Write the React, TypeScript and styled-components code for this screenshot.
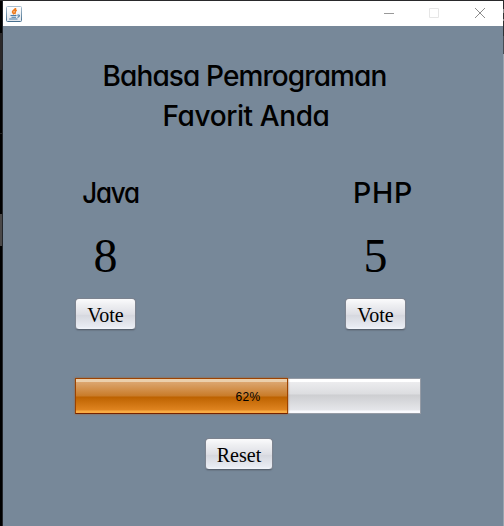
import React, { useState } from 'react';
import styled, { createGlobalStyle } from 'styled-components';

const GlobalStyle = createGlobalStyle`
  * { box-sizing: border-box; }
  html, body { margin: 0; padding: 0; overflow: hidden; background: #000; }
`;

const Desktop = styled.div`
  width: 504px;
  height: 526px;
  display: grid;
  grid-template-columns: 3px 500px 1px;
  padding-top: 1px;
  background: #29292b;
  overflow: hidden;
`;

const LeftEdge = styled.div`
  background: linear-gradient(#000 0 32px, #2b292a 32px 69px, #000 69px 132px, #222 132px 133px, #000 133px 213px, #4a4848 213px 245px, #000 245px);
  border-right: 1px solid #22252a;
`;

const RightEdge = styled.div`
  background: linear-gradient(#29292b 0 8px, #8b8b8c 8px 12px, #333 12px 18px, #8b8b8c 18px 20px, #333 20px 24px, #2c3035 24px 35px, #464c54 35px 53px, #98a4af 53px);
`;

const Window = styled.main`
  display: flex;
  flex-direction: column;
  background: #778899;
`;

const TitleBar = styled.header`
  height: 25px;
  flex: none;
  display: flex;
  align-items: center;
  justify-content: space-between;
  padding-left: 3px;
  background: #fff;
`;

const WindowControls = styled.div`
  display: flex;
`;

const ControlButton = styled.button<{ $width: number }>`
  width: ${({ $width }) => $width}px;
  height: 25px;
  display: flex;
  align-items: flex-start;
  justify-content: center;
  padding: 7px 0 0;
  border: 0;
  background: none;
`;

const Content = styled.section`
  flex: 1;
  display: flex;
  flex-direction: column;
  align-items: center;
  padding: 30px 10px 0 0;
  color: #000;
`;

const Title = styled.h1`
  width: 330px;
  margin: 0;
  text-align: center;
  font: 500 28px/40px Inter, "Liberation Sans", sans-serif;
  font-feature-settings: "cv11";
  white-space: nowrap;
`;

const TitleLine = styled.span<{ $tracking: number; $inset: number }>`
  display: block;
  padding-right: ${({ $inset }) => $inset}px;
  letter-spacing: ${({ $tracking }) => $tracking}px;
`;

const Candidates = styled.div`
  display: flex;
  align-self: flex-start;
  width: 351px;
  justify-content: space-between;
  margin: 37px 0 0 62px;
`;

const Candidate = styled.article`
  width: 81px;
  display: flex;
  flex-direction: column;
  align-items: center;
`;

const CandidateName = styled.h2<{ $shift: number; $tracking: number; $scale: number }>`
  margin: 0;
  padding-left: ${({ $shift }) => $shift}px;
  font: 500 28.5px/40px Inter, "Liberation Sans", sans-serif;
  font-feature-settings: "cv11";
  letter-spacing: ${({ $tracking }) => $tracking}px;
  transform: scaleX(${({ $scale }) => $scale});
`;

const Count = styled.output`
  height: 69px;
  margin-top: 16px;
  font: 48px/54px "Liberation Serif", serif;
`;

const MetalButton = styled.button<{ $width: number }>`
  width: ${({ $width }) => $width}px;
  height: 32px;
  flex: none;
  padding: 1px 0 0;
  border: 1px solid #7c838f;
  border-bottom-color: #596370;
  border-radius: 4px;
  background: linear-gradient(#fbfbfc 0, #eeeff2 20%, #dedfe5 51%, #d6d8df 55%, #e8ebf2 92%, #f2f5fb);
  box-shadow: 0 1px 1px #6b7988;
  color: #000;
  font: 20px/28px "Liberation Serif", serif;
`;

const ResetRow = styled.div`
  padding-right: 18px;
`;

const ProgressTrack = styled.div`
  position: relative;
  width: 346px;
  height: 36px;
  flex: none;
  margin: 48px 0 24px;
  border: 1px solid #959ba5;
  background: linear-gradient(#fff 0 3px, #ececee 3px, #dcdde0 15px, #cdced1 16px, #e5e6ea 31px, #fafbff 32px);
`;

const ProgressFill = styled.div<{ $width: number }>`
  width: ${({ $width }) => $width}px;
  height: 36px;
  margin: -1px 0 0 -1px;
  border: 1px solid #9c4200;
  border-bottom-color: #742200;
  background: linear-gradient(#ebcfac 0 3px, #dca670 3px, #c97b28 17px, #bd6200 18px, #df8420 31px, #f9ab43 32px);
  box-shadow: 0 0 2px #9b6437;
`;

const ProgressLabel = styled.span`
  position: absolute;
  inset: 1px 0 0;
  text-align: center;
  font: 12px/35px "Liberation Sans", sans-serif;
  letter-spacing: 0.3px;
`;

function JavaIcon() {
  return (
    <svg width="16" height="16" viewBox="0 0 16 16" aria-label="Java">
      <defs>
        <linearGradient id="frame" x2="0" y2="1">
          <stop stopColor="#a9bfd0" />
          <stop offset="1" stopColor="#476f8e" />
        </linearGradient>
        <linearGradient id="paper" x2="0" y2="1">
          <stop stopColor="#fff" />
          <stop offset="1" stopColor="#dfe4ea" />
        </linearGradient>
      </defs>
      <rect x=".5" y=".5" width="15" height="15" rx="1" fill="url(#paper)" stroke="url(#frame)" />
      <path d="M9.5 2C9.8 4.2 6 4.4 6.6 6.2L8 8.3M10.7 4C8.3 5 9.8 6.2 8.6 8" fill="none" stroke="#ef7b1b" strokeWidth="1.7" />
      <path d="M4.5 9.5H10.5M5.5 11.3H10M11.3 9.2C14.3 8.2 13.9 10.6 11.5 11.4M3.2 13H11.5" fill="none" stroke="#4a7ca6" strokeWidth="1.1" />
    </svg>
  );
}

interface CandidatePanelProps {
  name: string;
  votes: number;
  shift: number;
  tracking: number;
  scale: number;
  onVote: () => void;
}

function CandidatePanel({ name, votes, shift, tracking, scale, onVote }: CandidatePanelProps) {
  return (
    <Candidate>
      <CandidateName $shift={shift} $tracking={tracking} $scale={scale}>{name}</CandidateName>
      <Count>{votes}</Count>
      <MetalButton $width={61} onClick={onVote}>Vote</MetalButton>
    </Candidate>
  );
}

export default function App() {
  const [java, setJava] = useState(8);
  const [php, setPhp] = useState(5);
  const total = java + php;
  const share = total ? java / total : 0;
  const percent = Math.round(share * 100);

  return (
    <>
      <GlobalStyle />
      <Desktop>
        <LeftEdge />
        <Window>
          <TitleBar>
            <JavaIcon />
            <WindowControls>
              <ControlButton $width={44} aria-label="Minimize">
                <svg width="10" height="10"><path d="M0 5.5h10" stroke="#999" /></svg>
              </ControlButton>
              <ControlButton $width={46} aria-label="Maximize">
                <svg width="10" height="10"><path d="M.5.5h9v9h-9z" fill="none" stroke="#e6e6e6" /></svg>
              </ControlButton>
              <ControlButton $width={46} aria-label="Close">
                <svg width="10" height="10"><path d="M0 0l10 10M10 0L0 10" stroke="#8c8c8c" /></svg>
              </ControlButton>
            </WindowControls>
          </TitleBar>
          <Content>
            <Title>
              <TitleLine $tracking={-0.9} $inset={7}>Bahasa Pemrograman</TitleLine>
              <TitleLine $tracking={-0.4} $inset={4}>Favorit Anda</TitleLine>
            </Title>
            <Candidates>
              <CandidatePanel name="Java" votes={java} shift={12} tracking={-1.3} scale={0.91} onVote={() => setJava(java + 1)} />
              <CandidatePanel name="PHP" votes={php} shift={15} tracking={0.7} scale={1} onVote={() => setPhp(php + 1)} />
            </Candidates>
            <ProgressTrack role="progressbar" aria-valuenow={percent}>
              <ProgressFill $width={Math.round(346 * share)} />
              <ProgressLabel>{percent}%</ProgressLabel>
            </ProgressTrack>
            <ResetRow>
              <MetalButton $width={68} onClick={() => { setJava(0); setPhp(0); }}>Reset</MetalButton>
            </ResetRow>
          </Content>
        </Window>
        <RightEdge />
      </Desktop>
    </>
  );
}
